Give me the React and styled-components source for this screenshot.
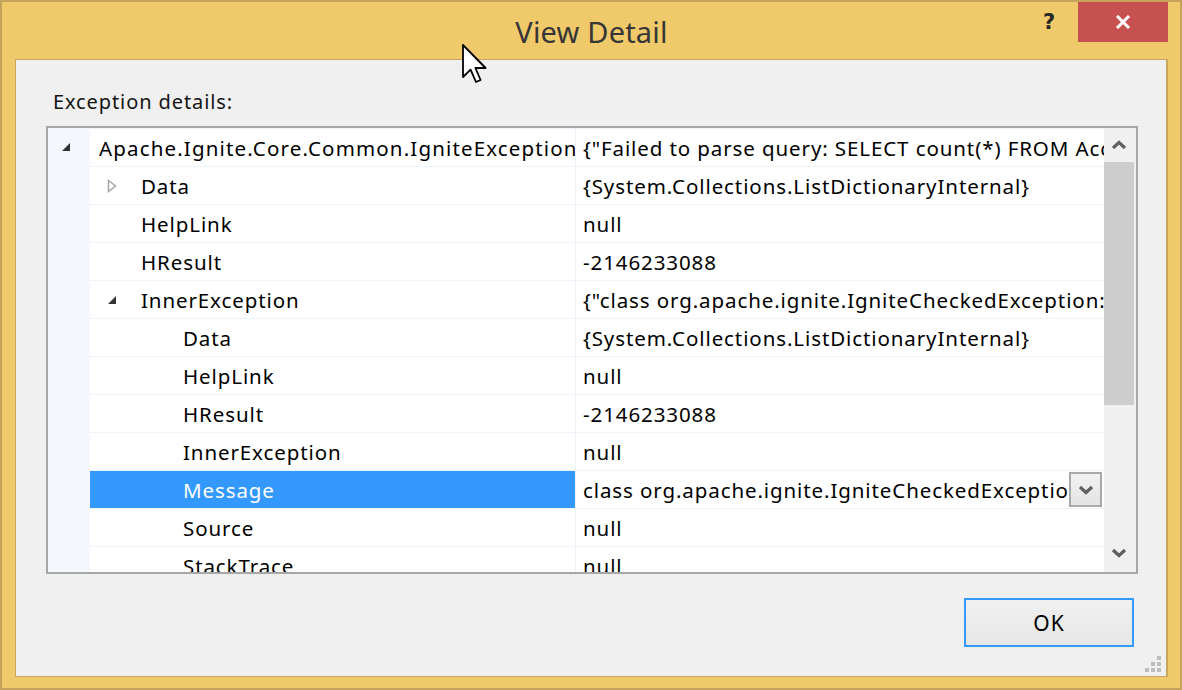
import React from "react";
import styled, { createGlobalStyle } from "styled-components";

const GlobalStyle = createGlobalStyle`
  html, body {
    margin: 0;
    padding: 0;
    background: #f0c96a;
  }
  body {
    font-family: "Noto Sans", "Open Sans", sans-serif;
  }
`;

const Window = styled.div`
  position: relative;
  width: 1182px;
  height: 690px;
  box-sizing: border-box;
  background: #f0c96a;
  border: 2px solid #c6a35b;
  padding: 0 12px 11px 13px;
  display: flex;
  flex-direction: column;
  overflow: hidden;
`;

const TitleBar = styled.div`
  height: 57px;
  display: grid;
  grid-template-columns: 1fr auto 1fr;
  align-items: start;
`;

const Title = styled.div`
  grid-column: 2;
  padding-top: 12px;
  font-size: 29px;
  line-height: 36px;
  letter-spacing: 0.2px;
  color: #363636;
`;

const Controls = styled.div`
  grid-column: 3;
  justify-self: end;
  display: flex;
  align-items: stretch;
  gap: 9px;
`;

const HelpButton = styled.div`
  width: 40px;
  height: 40px;
  display: flex;
  align-items: center;
  justify-content: center;
  font-family: "DejaVu Sans", sans-serif;
  font-weight: bold;
  font-size: 21px;
  color: #262626;
`;

const CloseButton = styled.div`
  width: 90px;
  height: 40px;
  background: #c75050;
  display: flex;
  align-items: center;
  justify-content: center;
`;

const Content = styled.div`
  position: relative;
  flex: 1;
  background: #f0f0f0;
  border: 1px solid #c9a65e;
  border-right-width: 2px;
  padding: 30px 28px 0 30px;
  display: flex;
  flex-direction: column;
`;

const Label = styled.div`
  padding-left: 7px;
  font-size: 20px;
  line-height: 24px;
  letter-spacing: 0.9px;
  color: #141414;
`;

const Tree = styled.div`
  margin-top: 12px;
  height: 448px;
  box-sizing: border-box;
  border: 2px solid #a7a7a7;
  background: #fff;
  display: flex;
`;

const Rows = styled.div`
  flex: 1;
  min-width: 0;
  overflow: hidden;
`;

const Row = styled.div`
  display: flex;
  height: 38px;
  font-size: 20.5px;
  letter-spacing: 0.9px;
  color: #000;
`;

const Gutter = styled.div`
  width: 42px;
  flex: none;
  background: #f4f7fc;
  display: flex;
  align-items: center;
  padding-left: 12px;
  box-sizing: border-box;
`;

const NameCell = styled.div`
  width: 486px;
  flex: none;
  box-sizing: border-box;
  border-top: 1px solid #eef3f9;
  border-right: 1px solid #eef3f9;
  padding-left: ${p => p.$indent}px;
  display: flex;
  align-items: center;
  overflow: hidden;
  white-space: nowrap;
  letter-spacing: ${p => p.$spacing || 0.9}px;
  background: ${p => (p.$selected ? "#3399ff" : "transparent")};
  color: ${p => (p.$selected ? "#fff" : "#000")};
`;

const ValueCell = styled.div`
  flex: 1;
  min-width: 0;
  border-top: 1px solid #eef3f9;
  padding-left: 7px;
  display: flex;
  align-items: center;
  white-space: nowrap;
`;

const ValueText = styled.span`
  flex: 1;
  min-width: 0;
  overflow: hidden;
`;

const ExpanderSlot = styled.span`
  width: 20px;
  flex: none;
  margin-right: 19px;
  display: flex;
  align-items: center;
  justify-content: center;
`;

const DropButton = styled.div`
  width: 33px;
  height: 35px;
  flex: none;
  margin-right: 2px;
  box-sizing: border-box;
  border: 2px solid #a9a9a9;
  background: linear-gradient(#f2f2f2, #e4e4e4);
  display: flex;
  align-items: center;
  justify-content: center;
`;

const ScrollBar = styled.div`
  width: 32px;
  flex: none;
  background: #f0f0f0;
  display: flex;
  flex-direction: column;
`;

const ArrowBox = styled.div`
  height: ${p => p.$h}px;
  display: flex;
  align-items: center;
  justify-content: center;
  padding-right: 2px;
`;

const Thumb = styled.div`
  height: 243px;
  width: 30px;
  background: #cdcdcd;
`;

const Track = styled.div`
  flex: 1;
`;

const Footer = styled.div`
  display: flex;
  justify-content: flex-end;
  padding: 24px 4px 0 0;
`;

const OkButton = styled.button`
  width: 170px;
  height: 49px;
  box-sizing: border-box;
  border: 2px solid #3399ff;
  background: linear-gradient(#f0f0f0, #e6e6e6);
  font-family: "Noto Sans", "Open Sans", sans-serif;
  font-size: 21px;
  letter-spacing: 1px;
  color: #000;
  padding: 0;
`;

const Grip = styled.svg`
  position: absolute;
  right: 5px;
  bottom: 4px;
`;

const Cursor = styled.svg`
  position: absolute;
  left: 460px;
  top: 42px;
`;

const Expanded = () => (
  <svg width="12" height="12" viewBox="0 0 12 12">
    <polygon points="10,2 10,10 2,10" fill="#333" />
  </svg>
);

const Collapsed = () => (
  <svg width="10" height="14" viewBox="0 0 10 14">
    <polygon points="1.5,1.5 8.5,7 1.5,12.5" fill="none" stroke="#a6a6a6" strokeWidth="1.5" />
  </svg>
);

const Chevron = ({ up }) => (
  <svg width="16" height="10" viewBox="0 0 16 10">
    <polyline
      points={up ? "2,8 8,2.5 14,8" : "2,2 8,7.5 14,2"}
      fill="none"
      stroke="#606060"
      strokeWidth="3.2"
    />
  </svg>
);

const rows = [
  { level: 0, exp: "open", spacing: 1.15, name: "Apache.Ignite.Core.Common.IgniteException", value: "{\"Failed to parse query: SELECT count(*) FROM Account WHERE balance > ?\"}" },
  { level: 1, exp: "closed", name: "Data", value: "{System.Collections.ListDictionaryInternal}" },
  { level: 1, name: "HelpLink", value: "null" },
  { level: 1, name: "HResult", value: "-2146233088" },
  { level: 1, exp: "open", name: "InnerException", value: "{\"class org.apache.ignite.IgniteCheckedException: Failed to parse query\"}" },
  { level: 2, name: "Data", value: "{System.Collections.ListDictionaryInternal}" },
  { level: 2, name: "HelpLink", value: "null" },
  { level: 2, name: "HResult", value: "-2146233088" },
  { level: 2, name: "InnerException", value: "null" },
  { level: 2, name: "Message", value: "class org.apache.ignite.IgniteCheckedException: Failed to parse query", selected: true },
  { level: 2, name: "Source", value: "null" },
  { level: 2, name: "StackTrace", value: "null" },
];

const TreeRow = ({ row }) => {
  const icon = row.exp === "open" ? <Expanded /> : row.exp === "closed" ? <Collapsed /> : null;
  const indent = row.level === 0 ? 9 : 42 * row.level - 30;
  return (
    <Row>
      <Gutter>{row.level === 0 && icon}</Gutter>
      <NameCell $indent={indent} $selected={row.selected} $spacing={row.spacing}>
        {row.level > 0 && <ExpanderSlot>{icon}</ExpanderSlot>}
        {row.name}
      </NameCell>
      <ValueCell>
        <ValueText>{row.value}</ValueText>
        {row.selected && (
          <DropButton>
            <Chevron />
          </DropButton>
        )}
      </ValueCell>
    </Row>
  );
};

export default function App() {
  return (
    <>
      <GlobalStyle />
      <Window>
        <TitleBar>
          <Title>View Detail</Title>
          <Controls>
            <HelpButton>?</HelpButton>
            <CloseButton>
              <svg width="16" height="14" viewBox="0 0 16 14">
                <path d="M2 1 L14 13 M14 1 L2 13" stroke="#fff" strokeWidth="3" />
              </svg>
            </CloseButton>
          </Controls>
        </TitleBar>
        <Content>
          <Label>Exception details:</Label>
          <Tree>
            <Rows>
              {rows.map((r, i) => (
                <TreeRow key={i} row={r} />
              ))}
            </Rows>
            <ScrollBar>
              <ArrowBox $h={34}>
                <Chevron up />
              </ArrowBox>
              <Thumb />
              <Track />
              <ArrowBox $h={38}>
                <Chevron />
              </ArrowBox>
            </ScrollBar>
          </Tree>
          <Footer>
            <OkButton>OK</OkButton>
          </Footer>
          <Grip width="16" height="16" viewBox="0 0 16 16">
            <rect x="12" y="0" width="4" height="4" fill="#bdbdbd" />
            <rect x="6" y="6" width="4" height="4" fill="#bdbdbd" />
            <rect x="12" y="6" width="4" height="4" fill="#bdbdbd" />
            <rect x="0" y="12" width="4" height="4" fill="#bdbdbd" />
            <rect x="6" y="12" width="4" height="4" fill="#bdbdbd" />
            <rect x="12" y="12" width="4" height="4" fill="#bdbdbd" />
          </Grip>
        </Content>
        <Cursor width="26" height="40" viewBox="0 0 13 20">
          <path
            d="M0.5 0.5 L0.5 16.5 L4.3 12.8 L7 19 L9.3 18 L6.7 12 L11.8 12 Z"
            fill="#fff"
            stroke="#000"
            strokeWidth="0.9"
            strokeLinejoin="round"
          />
        </Cursor>
      </Window>
    </>
  );
}
